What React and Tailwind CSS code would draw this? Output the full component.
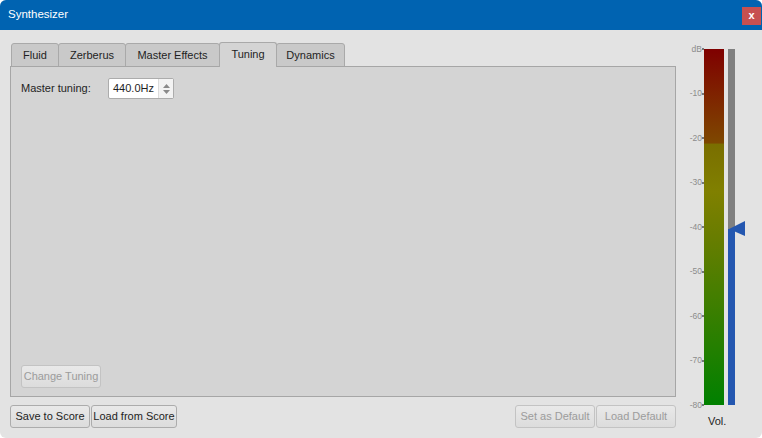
import React from "react";

const F = { fontFamily: '"Liberation Sans", Arial, sans-serif' };

function Tab({ label, w, active }) {
  return (
    <div
      className={
        "flex items-center justify-center border border-[#a9a9a9] rounded-t-[3px] -mr-px text-[11px] text-[#1e1e1e] whitespace-nowrap " +
        (active
          ? "h-[25px] bg-[#d4d4d4] border-b-0 relative z-10 pb-[2px]"
          : "h-[24px] bg-[#c9c9c9]")
      }
      style={{ width: w }}
    >
      {label}
    </div>
  );
}

function Btn({ children, w, disabled }) {
  return (
    <div
      className={
        "h-[23px] flex items-center justify-center rounded-[3px] border text-[11px] whitespace-nowrap bg-gradient-to-b from-[#e9e9e9] to-[#dcdcdc] " +
        (disabled ? "border-[#c3c3c3] text-[#9c9c9c]" : "border-[#acacac] text-[#1e1e1e]")
      }
      style={{ width: w }}
    >
      {children}
    </div>
  );
}

export default function App() {
  const labels = ["dB", "-10", "-20", "-30", "-40", "-50", "-60", "-70", "-80"];
  return (
    <div className="w-[762px] h-[438px] bg-white" style={F}>
      <div className="w-full h-full bg-[#e3e3e3] rounded-[6px] overflow-hidden flex flex-col">
        <div className="h-[30px] bg-[#0063b1] flex items-center pl-[8px] shrink-0">
          <span className="text-white text-[11.5px]">Synthesizer</span>
          <div className="ml-auto mr-px mt-[2px] w-[19px] h-[18px] bg-[#c75050] flex items-center justify-center text-white text-[11px] font-bold leading-none pb-[2px]">
            x
          </div>
        </div>
        <div className="flex flex-1">
          <div className="ml-[10px] w-[666px] flex flex-col pt-[12px]">
            <div className="flex items-end pl-px h-[25px]">
              <Tab label="Fluid" w={48} />
              <Tab label="Zerberus" w={68} />
              <Tab label="Master Effects" w={95} />
              <Tab label="Tuning" w={58} active />
              <Tab label="Dynamics" w={69} />
            </div>
            <div className="h-[331px] bg-[#d4d4d4] border border-[#a6a6a6] -mt-px flex flex-col px-[10px] pt-[11px] pb-[8px]">
              <div className="flex items-center">
                <span className="text-[11px] text-[#1e1e1e] w-[87px]">Master tuning:</span>
                <div className="w-[66px] h-[21px] bg-white border border-[#acacac] rounded-[2px] flex">
                  <div className="flex-1 flex items-center pl-[4px] text-[11px] text-[#1e1e1e]">440.0Hz</div>
                  <div className="w-[15px] border-l border-[#dcdcdc] flex flex-col items-center justify-center gap-[2px] bg-[#f3f3f3]">
                    <svg width="7" height="4" viewBox="0 0 7 4"><path d="M0 4 L3.5 0 L7 4 Z" fill="#8a8a8a" /></svg>
                    <svg width="7" height="4" viewBox="0 0 7 4"><path d="M0 0 L7 0 L3.5 4 Z" fill="#8a8a8a" /></svg>
                  </div>
                </div>
              </div>
              <div className="mt-auto">
                <Btn w={80} disabled>Change Tuning</Btn>
              </div>
            </div>
            <div className="flex mt-[8px]">
              <Btn w={80}>Save to Score</Btn>
              <div className="ml-px"><Btn w={86}>Load from Score</Btn></div>
              <div className="ml-auto"><Btn w={80} disabled>Set as Default</Btn></div>
              <div className="ml-px"><Btn w={80} disabled>Load Default</Btn></div>
            </div>
          </div>
          <div className="flex-1 relative">
            {/* meter */}
            <div className="absolute left-[28px] top-[19px] w-[20px] h-[356px] bg-[linear-gradient(to_bottom,#7f0000_0%,#7e4800_26.5%,#7a6e00_26.6%,#808000_40%,#6a7d00_52%,#008000_100%)]" />
            <div className="absolute left-[52px] top-[19px] w-[7px] h-[180px] bg-[#808080]" />
            <div className="absolute left-[52px] top-[199px] w-[7px] h-[176px] bg-[#2457b0]" />
            <svg className="absolute left-[52px] top-[190px]" width="18" height="18" viewBox="0 0 18 18">
              <path d="M1 9 L17 1 L17 16 Z" fill="#2457b0" />
            </svg>
            {labels.map((l, i) => (
              <div
                key={l}
                className="absolute right-[58px] flex items-center h-[10px] -mt-[5px]"
                style={{ top: 19 + i * 44.5 }}
              >
                <span className="text-[8.5px] text-[#8c8c8c] leading-none">{l}</span>
                <span className="w-[2px] h-[2px] bg-[#777]" />
              </div>
            ))}
            <div className="absolute left-[32px] top-[383px] text-[11px] text-[#1e1e1e]">Vol.</div>
          </div>
        </div>
      </div>
    </div>
  );
}
